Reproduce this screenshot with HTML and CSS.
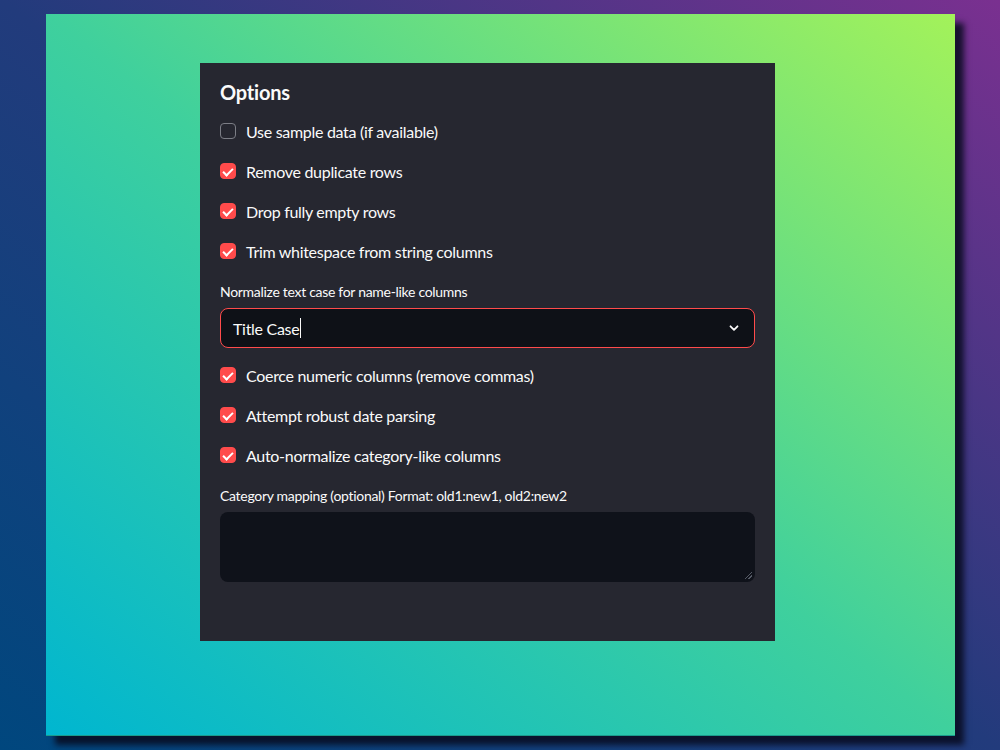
FILE: index.html
```html
<!doctype html>
<html>
<head>
<meta charset="utf-8">
<title>Options</title>
<link rel="stylesheet" href="styles.css">
</head>
<body>

<div class="frame">
    <div class="panel">
        <h2 class="title">Options</h2>

        <label class="check"><span class="box"></span>Use sample data (if available)</label>
        <label class="check on"><span class="box"></span>Remove duplicate rows</label>
        <label class="check on"><span class="box"></span>Drop fully empty rows</label>
        <label class="check on"><span class="box"></span>Trim whitespace from string columns</label>

        <div class="field">
            <div class="label">Normalize text case for name-like columns</div>
            <div class="select">
                <span class="value">Title Case<i class="caret"></i></span>
                <svg width="12" height="12" viewBox="0 0 12 12"><path d="M2.5 4.3 6 7.8 9.5 4.3" fill="none" stroke="#fafafa" stroke-width="1.8" stroke-linecap="round" stroke-linejoin="round"/></svg>
            </div>
        </div>

        <label class="check on"><span class="box"></span>Coerce numeric columns (remove commas)</label>
        <label class="check on"><span class="box"></span>Attempt robust date parsing</label>
        <label class="check on"><span class="box"></span>Auto-normalize category-like columns</label>

        <div class="field">
            <div class="label">Category mapping (optional) Format: old1:new1, old2:new2</div>
            <div class="area"><span class="grip"></span></div>
        </div>
    </div>
</div>

</body>
</html>
```

FILE: styles.css
```css
*{ margin: 0; padding: 0; box-sizing: border-box; }
html, body{ width: 100%; height: 100%; }
body{ background: linear-gradient(to top right, #00477e 0%, #223b7c 50%, #7a3090 100%); font-family: Lato, "Liberation Sans", sans-serif; letter-spacing: -0.3px; color: #fafafa; padding: 14px 0 0 46px; overflow: hidden; }

/* 外框 */
.frame{ width: 909px; height: 722px; padding: 49px 0 0 154px; background: linear-gradient(to top right, #00b6d0 0%, #3fd09d 50%, #a3f25a 100%); border-bottom: 1px solid #1a9b8c; box-shadow: 9px 9px 6px rgba(8, 10, 30, .85); }

/* 面板 */
.panel{ width: 575px; height: 578px; padding: 16px 20px 0; background: #262730; }
.title{ font-size: 20px; font-weight: 700; line-height: 26px; margin-bottom: 14px; letter-spacing: -0.2px; }

.check{ display: flex; align-items: center; height: 24px; margin-bottom: 16px; font-size: 16px; }
.box{ width: 16px; height: 16px; margin-right: 10px; border: 1px solid #7c7e86; border-radius: 4px; position: relative; }
.check.on .box{ background: #ff4b4b; border-color: #ff4b4b; }
.check.on .box:after{ content: ''; position: absolute; left: 4px; top: 2px; width: 4px; height: 8px; border: solid #fff; border-width: 0 2px 2px 0; transform: rotate(45deg); }

.field{ padding-top: 3px; margin-bottom: 15px; }
.label{ font-size: 14px; line-height: 20px; margin-bottom: 6px; }

.select{ height: 40px; display: flex; align-items: center; justify-content: space-between; padding: 0 14px 0 12px; background: #0e1117; border: 1px solid #ff4b4b; border-radius: 8px; font-size: 16px; }
.value{ display: flex; align-items: center; }
.caret{ width: 1px; height: 20px; background: #fafafa; margin-left: 1px; }

.area{ height: 70px; background: #0f121a; border-radius: 8px; position: relative; }
.grip{ position: absolute; right: 3px; bottom: 3px; width: 7px; height: 7px; background: linear-gradient(135deg, transparent 45%, #555a66 45%, #555a66 55%, transparent 55%, transparent 70%, #555a66 70%, #555a66 80%, transparent 80%); }
```
